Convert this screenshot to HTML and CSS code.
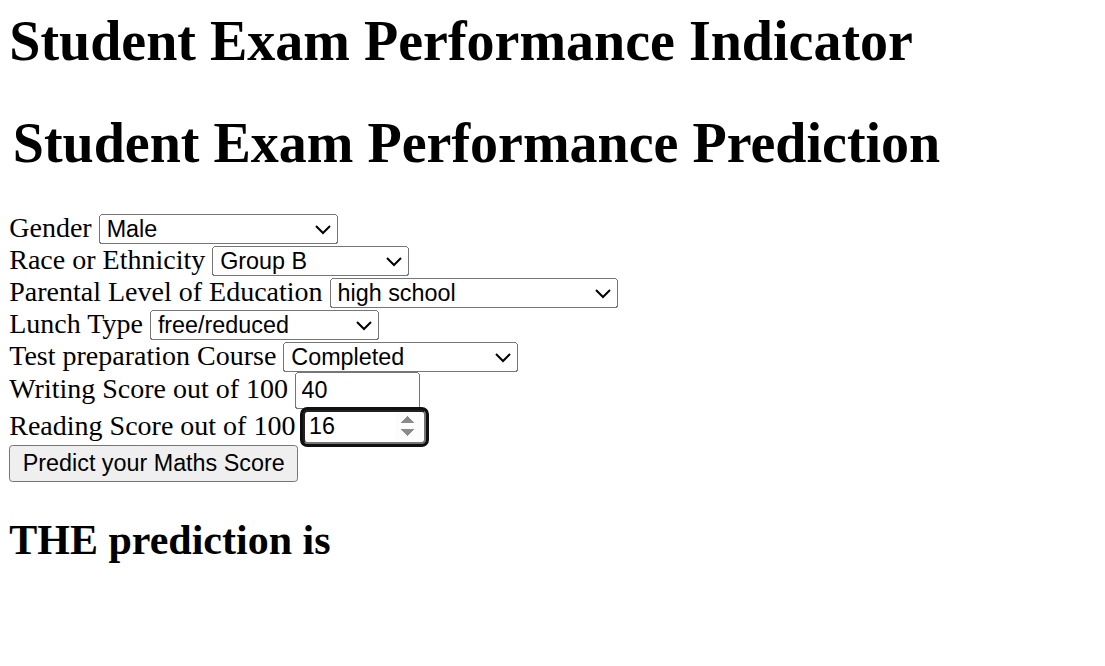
FILE: index.html
```html
<!DOCTYPE html>
<html lang="en">
<head>
<meta charset="utf-8">
<title>Student Exam Performance Indicator</title>
<link rel="stylesheet" href="styles.css">
</head>
<body class="page-body">
<div class="login">
  <h1 class="title">Student Exam Performance Indicator</h1>
  <form class="form">
    <h1 class="form-title"><span class="legend">Student Exam Performance Prediction</span></h1>
    <div class="field">
      <label class="label">Gender</label>
      <select class="control w-gender">
        <option>Male</option>
        <option>Female</option>
        <option>Select your Gender</option>
      </select>
    </div>
    <div class="field">
      <label class="label">Race or Ethnicity</label>
      <select class="control w-race">
        <option>Group B</option>
      </select>
    </div>
    <div class="field">
      <label class="label">Parental Level of Education</label>
      <select class="control w-parent">
        <option>high school</option>
      </select>
    </div>
    <div class="field">
      <label class="label">Lunch Type</label>
      <select class="control w-lunch">
        <option>free/reduced</option>
      </select>
    </div>
    <div class="field">
      <label class="label">Test preparation Course</label>
      <select class="control w-test">
        <option>Completed</option>
      </select>
    </div>
    <div class="field">
      <label class="label">Writing Score out of 100</label>
      <input class="control num" type="number" value="40" min="0" max="100">
    </div>
    <div class="field">
      <label class="label">Reading Score out of 100</label>
      <input class="control num num-focus" type="number" value="16" min="0" max="100">
    </div>
    <div class="field">
      <input class="control btn" type="button" value="Predict your Maths Score">
    </div>
  </form>
  <h2 class="result">THE prediction is</h2>
</div>
</body>
</html>
```

FILE: styles.css
```css
html, body {
  background: #ffffff;
}

.page-body {
  margin: 0;
  font-family: "Liberation Serif", "Times New Roman", serif;
  color: #000000;
}

.login {
  zoom: 1.75;
  padding-left: 5.3px;
}

.title {
  font-size: 32px;
  font-weight: bold;
  margin: 5.2px 0 21.44px 0;
}

.form {
  margin: 0;
}

.form-title {
  font-size: 32px;
  font-weight: bold;
  margin: 21.44px 0;
}

.legend {
  display: block;
  padding: 0 2px;
}

.field {
  font-size: 16px;
}

.control {
  font-family: "Liberation Sans", Arial, sans-serif;
  font-size: 13.333px;
  color: #000000;
}

.w-gender { width: 136.6px; }
.w-race { width: 112.6px; }
.w-parent { width: 164.6px; }
.w-lunch { width: 130.9px; }
.w-test { width: 134.3px; }

.num {
  width: 71.4px;
  box-sizing: border-box;
}

.num-focus {
  outline: 2px solid #101010;
  outline-offset: -1px;
  border-radius: 3px;
}

.num-focus::-webkit-inner-spin-button {
  opacity: 1;
}

.result {
  font-size: 24px;
  font-weight: bold;
  margin: 19.92px 0;
}
```
